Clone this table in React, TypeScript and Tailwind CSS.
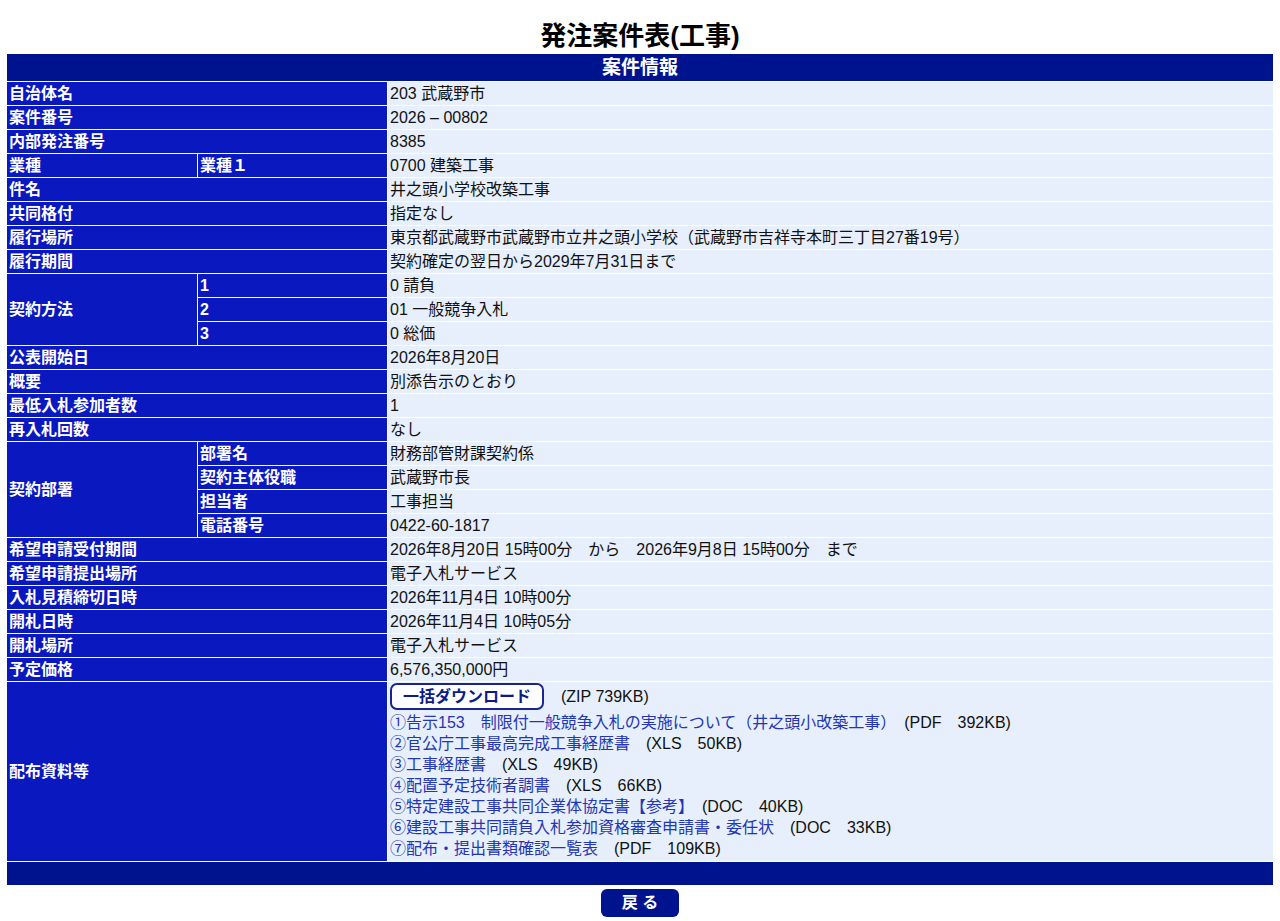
import React from "react";

const L = "bg-[#0a18c0] text-white font-bold px-[2px] h-[23px] p-0 align-middle whitespace-nowrap";
const V = "bg-[#e6effb] text-[#111] px-[2px] h-[23px] p-0 align-middle whitespace-nowrap";

type Row = { label: string; value: React.ReactNode };

function Simple({ label, value }: Row) {
  return (
    <tr>
      <td colSpan={2} className={L}>{label}</td>
      <td className={V}>{value}</td>
    </tr>
  );
}

const links: [string, string][] = [
  ["①告示153　制限付一般競争入札の実施について（井之頭小改築工事）", "(PDF　392KB)"],
  ["②官公庁工事最高完成工事経歴書", "(XLS　50KB)"],
  ["③工事経歴書", "(XLS　49KB)"],
  ["④配置予定技術者調書", "(XLS　66KB)"],
  ["⑤特定建設工事共同企業体協定書【参考】", "(DOC　40KB)"],
  ["⑥建設工事共同請負入札参加資格審査申請書・委任状", "(DOC　33KB)"],
  ["⑦配布・提出書類確認一覧表", "(PDF　109KB)"],
];

export default function App() {
  return (
    <div
      className="w-[1280px] min-h-[921px] bg-white text-[16px]"
      style={{ fontFamily: '"Liberation Sans", "Noto Sans CJK JP", sans-serif' }}
    >
      <h1 className="text-center text-[26px] font-bold leading-[30px] pt-[21px] pb-[2px] text-black">
        発注案件表(工事)
      </h1>
      <div className="px-[6px]">
        <table className="w-full table-fixed border-separate border-spacing-[1px] leading-[20px]">
          <colgroup>
            <col className="w-[190px]" />
            <col className="w-[189px]" />
            <col />
          </colgroup>
          <tbody>
            <tr>
              <td colSpan={3} className="bg-[#00138f] text-white font-bold text-center text-[19px] h-[27px] p-0 align-middle">
                案件情報
              </td>
            </tr>
            <Simple label="自治体名" value="203 武蔵野市" />
            <Simple label="案件番号" value="2026 – 00802" />
            <Simple label="内部発注番号" value="8385" />
            <tr>
              <td className={L}>業種</td>
              <td className={L}>業種１</td>
              <td className={V}>0700 建築工事</td>
            </tr>
            <Simple label="件名" value="井之頭小学校改築工事" />
            <Simple label="共同格付" value="指定なし" />
            <Simple label="履行場所" value="東京都武蔵野市武蔵野市立井之頭小学校（武蔵野市吉祥寺本町三丁目27番19号）" />
            <Simple label="履行期間" value="契約確定の翌日から2029年7月31日まで" />
            <tr>
              <td rowSpan={3} className={L}>契約方法</td>
              <td className={L}>1</td>
              <td className={V}>0 請負</td>
            </tr>
            <tr>
              <td className={L}>2</td>
              <td className={V}>01 一般競争入札</td>
            </tr>
            <tr>
              <td className={L}>3</td>
              <td className={V}>0 総価</td>
            </tr>
            <Simple label="公表開始日" value="2026年8月20日" />
            <Simple label="概要" value="別添告示のとおり" />
            <Simple label="最低入札参加者数" value="1" />
            <Simple label="再入札回数" value="なし" />
            <tr>
              <td rowSpan={4} className={L}>契約部署</td>
              <td className={L}>部署名</td>
              <td className={V}>財務部管財課契約係</td>
            </tr>
            <tr>
              <td className={L}>契約主体役職</td>
              <td className={V}>武蔵野市長</td>
            </tr>
            <tr>
              <td className={L}>担当者</td>
              <td className={V}>工事担当</td>
            </tr>
            <tr>
              <td className={L}>電話番号</td>
              <td className={V}>0422-60-1817</td>
            </tr>
            <Simple label="希望申請受付期間" value="2026年8月20日 15時00分　から　2026年9月8日 15時00分　まで" />
            <Simple label="希望申請提出場所" value="電子入札サービス" />
            <Simple label="入札見積締切日時" value="2026年11月4日 10時00分" />
            <Simple label="開札日時" value="2026年11月4日 10時05分" />
            <Simple label="開札場所" value="電子入札サービス" />
            <Simple label="予定価格" value="6,576,350,000円" />
            <tr>
              <td colSpan={2} className={L}>配布資料等</td>
              <td className="bg-[#e6effb] text-[#111] px-[2px] pt-[1px] pb-[2px] align-top">
                <div className="flex items-center h-[27px] mb-[2px]">
                  <span className="inline-flex items-center justify-center h-[27px] w-[154px] border-2 border-[#1a2590] rounded-[7px] bg-white text-[#0c1b8a] font-bold">
                    一括ダウンロード
                  </span>
                  <span className="ml-[17px]">(ZIP 739KB)</span>
                </div>
                {links.map(([t, s]) => (
                  <div key={t} className="leading-[21px]">
                    <span className="text-[#2436b4]">{t}</span>
                    <span className="text-[#111]">　{s}</span>
                  </div>
                ))}
              </td>
            </tr>
            <tr>
              <td colSpan={3} className="bg-[#00138f] h-[23px] p-0" />
            </tr>
          </tbody>
        </table>
        <div className="flex justify-center mt-[3px]">
          <button className="w-[78px] h-[28px] rounded-[6px] bg-[#00138f] text-white font-bold text-[16px] leading-none">
            戻 る
          </button>
        </div>
      </div>
    </div>
  );
}
